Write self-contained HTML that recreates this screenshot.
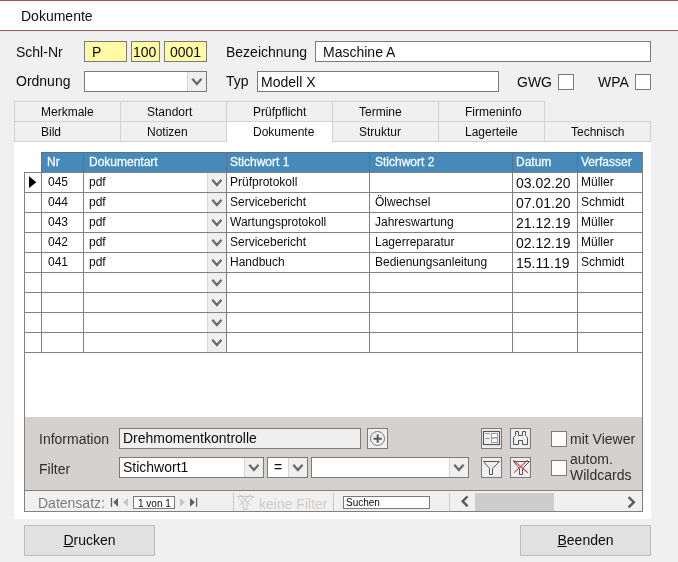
<!DOCTYPE html>
<html><head><meta charset="utf-8">
<style>
*{margin:0;padding:0;box-sizing:border-box}
body *{will-change:transform}
html,body{width:678px;height:562px;overflow:hidden;background:#f0f0f0;font-family:"Liberation Sans",sans-serif;color:#0c0c0c}
.a{position:absolute}
.t{position:absolute;white-space:nowrap;line-height:16px;font-size:14px}
.s{position:absolute;white-space:nowrap;line-height:14px;font-size:12px}
.box{position:absolute;border:1px solid #7a7a7a;background:#fff}
.yel{background:#fff9a8}
.tab{position:absolute;height:21px;border:1px solid #d2d2d2;background:#f0f0f0;font-size:12px;line-height:20px;text-align:left;padding-left:26px;color:#0c0c0c}
.btn{position:absolute;border:1px solid #bdbdbd;background:#e1e1e1;font-size:14px;text-align:center;line-height:28px;color:#0c0c0c}
.hd{color:#f2fcff;-webkit-text-stroke:0.3px #f2fcff}
.ib{background:#efefef}
</style></head><body>
<div class="a" style="left:0px;top:0px;width:678px;height:1px;background:#985e5e;"></div>
<div class="a" style="left:0px;top:1px;width:678px;height:29px;background:#fff;"></div>
<div class="a" style="left:0px;top:1px;width:678px;height:1px;background:#fbf2f2;"></div>
<div class="a" style="left:0px;top:30px;width:678px;height:1px;background:#936060;"></div>
<div class="a" style="left:0px;top:31px;width:678px;height:1px;background:#f3e3e3;"></div>
<div class="t" style="left:21px;top:8px;">Dokumente</div>
<div class="t" style="left:16px;top:44px;">Schl-Nr</div>
<div class="a" style="left:84px;top:41px;width:43px;height:21px;background:#fffaa4;border:1px solid #7a7a7a"></div>
<div class="t" style="left:92px;top:44px;">P</div>
<div class="a" style="left:131px;top:41px;width:29px;height:21px;background:#fffaa4;border:1px solid #7a7a7a"></div>
<div class="t" style="left:133px;top:44px;">100</div>
<div class="a" style="left:164px;top:41px;width:43px;height:21px;background:#fffaa4;border:1px solid #7a7a7a"></div>
<div class="t" style="left:170px;top:44px;">0001</div>
<div class="t" style="left:226px;top:44px;">Bezeichnung</div>
<div class="a" style="left:315px;top:41px;width:336px;height:21px;background:#fff;border:1px solid #7a7a7a"></div>
<div class="t" style="left:323px;top:44px;">Maschine A</div>
<div class="t" style="left:16px;top:73px;">Ordnung</div>
<div class="a" style="left:84px;top:71px;width:123px;height:21px;background:#fff;border:1px solid #7a7a7a"></div>
<div class="a" style="left:187px;top:72px;width:19px;height:19px;background:#efefef;border-left:1px solid #d6d6d6"><svg class="a" style="left:0;top:0" width="19" height="19"><path d="M4.30 6.80L8.90 12.00L13.50 6.80" fill="none" stroke="#6a6a6a" stroke-width="2.3"/></svg></div>
<div class="t" style="left:226px;top:73px;">Typ</div>
<div class="a" style="left:257px;top:71px;width:242px;height:21px;background:#fff;border:1px solid #7a7a7a"></div>
<div class="t" style="left:261px;top:74px;">Modell X</div>
<div class="t" style="left:517px;top:74px;">GWG</div>
<div class="a" style="left:558px;top:74px;width:16px;height:16px;background:#fff;border:1px solid #7a7a7a"></div>
<div class="t" style="left:598px;top:74px;">WPA</div>
<div class="a" style="left:635px;top:74px;width:16px;height:16px;background:#fff;border:1px solid #7a7a7a"></div>
<div class="tab" style="left:14px;top:101px;width:107px">Merkmale</div>
<div class="tab" style="left:120px;top:101px;width:107px">Standort</div>
<div class="tab" style="left:226px;top:101px;width:107px">Prüfpflicht</div>
<div class="tab" style="left:332px;top:101px;width:107px">Termine</div>
<div class="tab" style="left:438px;top:101px;width:107px">Firmeninfo</div>
<div class="tab" style="left:14px;top:121px;width:107px">Bild</div>
<div class="tab" style="left:120px;top:121px;width:107px">Notizen</div>
<div class="tab" style="left:332px;top:121px;width:107px">Struktur</div>
<div class="tab" style="left:438px;top:121px;width:107px">Lagerteile</div>
<div class="tab" style="left:544px;top:121px;width:107px">Technisch</div>
<div class="a" style="left:14px;top:142px;width:637px;height:377px;background:#fff;"></div>
<div class="tab" style="left:226px;top:121px;width:107px;height:21px;background:#fff;border-bottom:none">Dokumente</div>
<div class="a" style="left:41px;top:152px;width:602px;height:20px;background:#58728a;"></div>
<div class="a" style="left:42px;top:153px;width:600px;height:19px;background:#4789b8;"></div>
<div class="a" style="left:83px;top:153px;width:1px;height:19px;background:#58728a;"></div>
<div class="a" style="left:226px;top:153px;width:1px;height:19px;background:#58728a;"></div>
<div class="a" style="left:369px;top:153px;width:1px;height:19px;background:#58728a;"></div>
<div class="a" style="left:512px;top:153px;width:1px;height:19px;background:#58728a;"></div>
<div class="a" style="left:577px;top:153px;width:1px;height:19px;background:#58728a;"></div>
<div class="s hd" style="left:47px;top:155px;">Nr</div>
<div class="s hd" style="left:89px;top:155px;">Dokumentart</div>
<div class="s hd" style="left:230px;top:155px;">Stichwort 1</div>
<div class="s hd" style="left:375px;top:155px;">Stichwort 2</div>
<div class="s hd" style="left:516px;top:155px;">Datum</div>
<div class="s hd" style="left:581px;top:155px;">Verfasser</div>
<div class="a" style="left:24px;top:172px;width:619px;height:1px;background:#808080;"></div>
<div class="a" style="left:24px;top:192px;width:619px;height:1px;background:#808080;"></div>
<div class="a" style="left:24px;top:212px;width:619px;height:1px;background:#808080;"></div>
<div class="a" style="left:24px;top:232px;width:619px;height:1px;background:#808080;"></div>
<div class="a" style="left:24px;top:252px;width:619px;height:1px;background:#808080;"></div>
<div class="a" style="left:24px;top:272px;width:619px;height:1px;background:#808080;"></div>
<div class="a" style="left:24px;top:292px;width:619px;height:1px;background:#808080;"></div>
<div class="a" style="left:24px;top:312px;width:619px;height:1px;background:#808080;"></div>
<div class="a" style="left:24px;top:332px;width:619px;height:1px;background:#808080;"></div>
<div class="a" style="left:24px;top:352px;width:619px;height:1px;background:#808080;"></div>
<div class="a" style="left:24px;top:172px;width:1px;height:181px;background:#808080;"></div>
<div class="a" style="left:41px;top:172px;width:1px;height:181px;background:#808080;"></div>
<div class="a" style="left:83px;top:172px;width:1px;height:181px;background:#808080;"></div>
<div class="a" style="left:226px;top:172px;width:1px;height:181px;background:#808080;"></div>
<div class="a" style="left:369px;top:172px;width:1px;height:181px;background:#808080;"></div>
<div class="a" style="left:512px;top:172px;width:1px;height:181px;background:#808080;"></div>
<div class="a" style="left:577px;top:172px;width:1px;height:181px;background:#808080;"></div>
<div class="a" style="left:207px;top:173px;width:19px;height:19px;background:#efefef;border-left:1px solid #d6d6d6"><svg class="a" style="left:0;top:0" width="19" height="19"><path d="M4.30 6.80L8.90 12.00L13.50 6.80" fill="none" stroke="#6a6a6a" stroke-width="2.3"/></svg></div>
<div class="a" style="left:207px;top:193px;width:19px;height:19px;background:#efefef;border-left:1px solid #d6d6d6"><svg class="a" style="left:0;top:0" width="19" height="19"><path d="M4.30 6.80L8.90 12.00L13.50 6.80" fill="none" stroke="#6a6a6a" stroke-width="2.3"/></svg></div>
<div class="a" style="left:207px;top:213px;width:19px;height:19px;background:#efefef;border-left:1px solid #d6d6d6"><svg class="a" style="left:0;top:0" width="19" height="19"><path d="M4.30 6.80L8.90 12.00L13.50 6.80" fill="none" stroke="#6a6a6a" stroke-width="2.3"/></svg></div>
<div class="a" style="left:207px;top:233px;width:19px;height:19px;background:#efefef;border-left:1px solid #d6d6d6"><svg class="a" style="left:0;top:0" width="19" height="19"><path d="M4.30 6.80L8.90 12.00L13.50 6.80" fill="none" stroke="#6a6a6a" stroke-width="2.3"/></svg></div>
<div class="a" style="left:207px;top:253px;width:19px;height:19px;background:#efefef;border-left:1px solid #d6d6d6"><svg class="a" style="left:0;top:0" width="19" height="19"><path d="M4.30 6.80L8.90 12.00L13.50 6.80" fill="none" stroke="#6a6a6a" stroke-width="2.3"/></svg></div>
<div class="a" style="left:207px;top:273px;width:19px;height:19px;background:#efefef;border-left:1px solid #d6d6d6"><svg class="a" style="left:0;top:0" width="19" height="19"><path d="M4.30 6.80L8.90 12.00L13.50 6.80" fill="none" stroke="#6a6a6a" stroke-width="2.3"/></svg></div>
<div class="a" style="left:207px;top:293px;width:19px;height:19px;background:#efefef;border-left:1px solid #d6d6d6"><svg class="a" style="left:0;top:0" width="19" height="19"><path d="M4.30 6.80L8.90 12.00L13.50 6.80" fill="none" stroke="#6a6a6a" stroke-width="2.3"/></svg></div>
<div class="a" style="left:207px;top:313px;width:19px;height:19px;background:#efefef;border-left:1px solid #d6d6d6"><svg class="a" style="left:0;top:0" width="19" height="19"><path d="M4.30 6.80L8.90 12.00L13.50 6.80" fill="none" stroke="#6a6a6a" stroke-width="2.3"/></svg></div>
<div class="a" style="left:207px;top:333px;width:19px;height:19px;background:#efefef;border-left:1px solid #d6d6d6"><svg class="a" style="left:0;top:0" width="19" height="19"><path d="M4.30 6.80L8.90 12.00L13.50 6.80" fill="none" stroke="#6a6a6a" stroke-width="2.3"/></svg></div>
<svg class="a" style="left:25px;top:173px" width="16" height="19"><path d="M4 3.3V15L11.3 9.15Z" fill="#000"/></svg>
<div class="s" style="left:48px;top:175px;">045</div>
<div class="s" style="left:89px;top:175px;">pdf</div>
<div class="s" style="left:230px;top:175px;">Prüfprotokoll</div>
<div class="t" style="left:516px;top:175px;">03.02.20</div>
<div class="s" style="left:581px;top:175px;">Müller</div>
<div class="s" style="left:48px;top:195px;">044</div>
<div class="s" style="left:89px;top:195px;">pdf</div>
<div class="s" style="left:230px;top:195px;">Servicebericht</div>
<div class="s" style="left:375px;top:195px;">Ölwechsel</div>
<div class="t" style="left:516px;top:195px;">07.01.20</div>
<div class="s" style="left:581px;top:195px;">Schmidt</div>
<div class="s" style="left:48px;top:215px;">043</div>
<div class="s" style="left:89px;top:215px;">pdf</div>
<div class="s" style="left:230px;top:215px;">Wartungsprotokoll</div>
<div class="s" style="left:375px;top:215px;">Jahreswartung</div>
<div class="t" style="left:516px;top:215px;">21.12.19</div>
<div class="s" style="left:581px;top:215px;">Müller</div>
<div class="s" style="left:48px;top:235px;">042</div>
<div class="s" style="left:89px;top:235px;">pdf</div>
<div class="s" style="left:230px;top:235px;">Servicebericht</div>
<div class="s" style="left:375px;top:235px;">Lagerreparatur</div>
<div class="t" style="left:516px;top:235px;">02.12.19</div>
<div class="s" style="left:581px;top:235px;">Müller</div>
<div class="s" style="left:48px;top:255px;">041</div>
<div class="s" style="left:89px;top:255px;">pdf</div>
<div class="s" style="left:230px;top:255px;">Handbuch</div>
<div class="s" style="left:375px;top:255px;">Bedienungsanleitung</div>
<div class="t" style="left:516px;top:255px;">15.11.19</div>
<div class="s" style="left:581px;top:255px;">Schmidt</div>
<div class="a" style="left:24px;top:352px;width:1px;height:160px;background:#808080;"></div>
<div class="a" style="left:642px;top:152px;width:1px;height:360px;background:#808080;"></div>
<div class="a" style="left:24px;top:511px;width:619px;height:1px;background:#808080;"></div>
<div class="a" style="left:25px;top:417px;width:617px;height:73px;background:#d5d1cf;"></div>
<div class="a" style="left:24px;top:490px;width:619px;height:1px;background:#808080;"></div>
<div class="a" style="left:25px;top:491px;width:617px;height:20px;background:#f0f0f0;"></div>
<div class="t" style="left:39px;top:431px;color:#2e2e2e">Information</div>
<div class="a" style="left:119px;top:428px;width:242px;height:21px;background:#efefef;border:1px solid #7a7a7a"></div>
<div class="t" style="left:123px;top:430px;">Drehmomentkontrolle</div>
<div class="a" style="left:367px;top:428px;width:21px;height:21px;background:#efefef;border:1px solid #7a7a7a"><svg class="a" style="left:0;top:0" width="19" height="19"><circle cx="9.5" cy="9.5" r="7" fill="none" stroke="#777" stroke-width="1"/><path d="M9.7 5.5V13.8M5.5 9.65H13.8" stroke="#585858" stroke-width="2"/></svg></div>
<div class="t" style="left:39px;top:461px;color:#2e2e2e">Filter</div>
<div class="a" style="left:119px;top:457px;width:145px;height:21px;background:#fff;border:1px solid #7a7a7a"></div>
<div class="a" style="left:244px;top:458px;width:19px;height:19px;background:#efefef;border-left:1px solid #d6d6d6"><svg class="a" style="left:0;top:0" width="19" height="19"><path d="M4.30 6.80L8.90 12.00L13.50 6.80" fill="none" stroke="#6a6a6a" stroke-width="2.3"/></svg></div>
<div class="t" style="left:123px;top:459px;">Stichwort1</div>
<div class="a" style="left:267px;top:457px;width:41px;height:21px;background:#fff;border:1px solid #7a7a7a"></div>
<div class="a" style="left:288px;top:458px;width:19px;height:19px;background:#efefef;border-left:1px solid #d6d6d6"><svg class="a" style="left:0;top:0" width="19" height="19"><path d="M4.30 6.80L8.90 12.00L13.50 6.80" fill="none" stroke="#6a6a6a" stroke-width="2.3"/></svg></div>
<div class="t" style="left:274px;top:459px;">=</div>
<div class="a" style="left:311px;top:457px;width:158px;height:21px;background:#fff;border:1px solid #7a7a7a"></div>
<div class="a" style="left:449px;top:458px;width:19px;height:19px;background:#efefef;border-left:1px solid #d6d6d6"><svg class="a" style="left:0;top:0" width="19" height="19"><path d="M4.30 6.80L8.90 12.00L13.50 6.80" fill="none" stroke="#6a6a6a" stroke-width="2.3"/></svg></div>
<div class="a" style="left:481px;top:428px;width:21px;height:21px;background:#efefef;border:1px solid #7a7a7a"><svg class="a" style="left:0;top:0" width="19" height="19">
<rect x="1.5" y="2.5" width="16" height="13" fill="#fff" stroke="#555" stroke-width="1.2"/>
<rect x="3.2" y="5" width="5" height="9.5" fill="#ececec"/>
<path d="M3.2 4.5H7.7M3.2 9.5H7.7" stroke="#9a9a9a"/>
<rect x="9.5" y="4.5" width="6" height="9" fill="#fff" stroke="#9a9a9a"/><path d="M9.5 8.9H15.5" stroke="#9a9a9a" stroke-width="1.5"/></svg></div>
<div class="a" style="left:510px;top:428px;width:21px;height:21px;background:#efefef;border:1px solid #7a7a7a"><svg class="a" style="left:0;top:0" width="19" height="19">
<path d="M4.5 2.5H7.5V6.5H11.5V2.5H14.5V6.5L16.5 8.5V15.5H11.5V11.5H7.5V15.5H2.5V8.5L4.5 6.5Z" fill="none" stroke="#555"/></svg></div>
<div class="a" style="left:481px;top:457px;width:21px;height:21px;background:#efefef;border:1px solid #7a7a7a"><svg class="a" style="left:0;top:0" width="19" height="19">
<path d="M1.5 3.5H17.5L10.5 10.5V16.5H7.5V10.5Z" fill="none" stroke="#555"/></svg></div>
<div class="a" style="left:510px;top:457px;width:21px;height:21px;background:#efefef;border:1px solid #7a7a7a"><svg class="a" style="left:0;top:0" width="19" height="19">
<path d="M2.5 3.5H18.5L11.5 10.5V16.5H8.5V10.5Z" fill="none" stroke="#555"/>
<path d="M2.3 2.1L16.8 14.8M16.6 2.1L3 14.6" stroke="#c43a3a" stroke-opacity=".85" stroke-width="1.2"/></svg></div>
<div class="a" style="left:551px;top:431px;width:16px;height:16px;background:#fff;border:1px solid #7a7a7a"></div>
<div class="t" style="left:570px;top:431px;color:#2e2e2e">mit Viewer</div>
<div class="a" style="left:551px;top:460px;width:16px;height:16px;background:#fff;border:1px solid #7a7a7a"></div>
<div class="t" style="left:570px;top:451px;color:#2e2e2e">autom.<br>Wildcards</div>
<div class="t" style="left:38px;top:495px;color:#7c7c7c">Datensatz:</div>
<svg class="a" style="left:108px;top:494px" width="95" height="16">
<rect x="2.8" y="3.9" width="1.3" height="8.9" fill="#5f5f5f"/><path d="M10 3.9L5.2 8.35L10 12.8Z" fill="#5f5f5f"/>
<path d="M20 3.9L15 8.35L20 12.8Z" fill="#cac6c4"/>
<path d="M72 3.9L77 8.35L72 12.8Z" fill="#cac6c4"/>
<path d="M82 3.9L86.8 8.35L82 12.8Z" fill="#5f5f5f"/><rect x="88" y="3.9" width="1.2" height="8.9" fill="#5f5f5f"/></svg>
<div class="a" style="left:133px;top:496px;width:42px;height:13px;background:#fff;border:1px solid #7a7a7a"></div>
<div class="a" style="left:138px;top:497px;font-size:10px;line-height:13px">1 von 1</div>
<div class="a" style="left:233px;top:493px;width:1px;height:18px;background:#c8c8c8;"></div>
<svg class="a" style="left:236px;top:494px" width="19" height="17">
<path d="M1.1 2.4H17.9L10.8 8.8V15.5H7.3V8.8Z" fill="none" stroke="#c8c4c2"/>
<path d="M3.1 0.2L14.8 11.7M14.6 0.2L3.1 11.7" stroke="#c8c4c2"/></svg>
<div class="t" style="left:259px;top:496px;color:#cfcbc9">keine Filter</div>
<div class="a" style="left:333px;top:493px;width:1px;height:18px;background:#c8c8c8;"></div>
<div class="a" style="left:343px;top:496px;width:87px;height:13px;background:#fff;border:1px solid #7a7a7a"></div>
<div class="a" style="left:346px;top:496px;font-size:10px;line-height:13px">Suchen</div>
<div class="a" style="left:449px;top:493px;width:1px;height:18px;background:#c8c8c8;"></div>
<svg class="a" style="left:458px;top:494px" width="14" height="16"><path d="M9.6 2.3L4.6 7.2L9.6 12.3" fill="none" stroke="#5c5c5c" stroke-width="2.4"/></svg>
<div class="a" style="left:475px;top:493px;width:79px;height:18px;background:#cdcdcd;"></div>
<svg class="a" style="left:624px;top:494px" width="14" height="16"><path d="M4.6 3.1L9.9 8.2L4.6 13.4" fill="none" stroke="#5c5c5c" stroke-width="2.4"/></svg>
<div class="btn" style="left:24px;top:525px;width:131px;height:31px"><u>D</u>rucken</div>
<div class="btn" style="left:520px;top:525px;width:131px;height:31px"><u>B</u>eenden</div>
</body></html>
